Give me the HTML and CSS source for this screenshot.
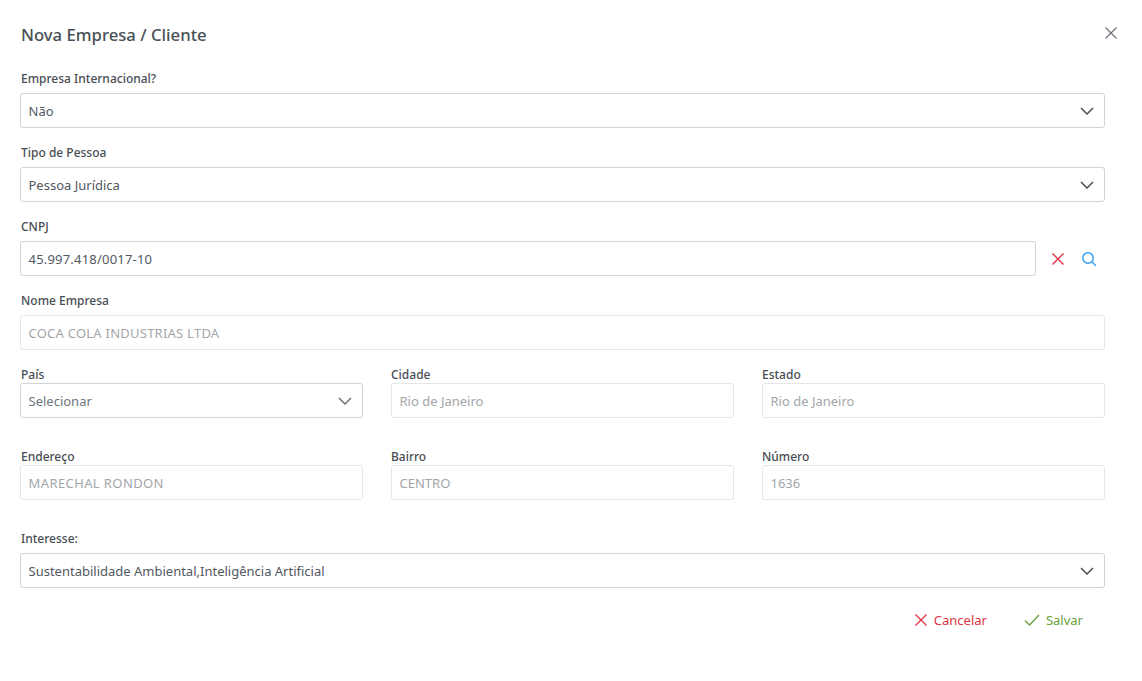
FILE: index.html
```html
<!DOCTYPE html>
<html lang="pt">
<head>
<meta charset="utf-8">
<title>Nova Empresa / Cliente</title>
<link rel="stylesheet" href="styles.css">
</head>
<body>
<div class="modal">
  <header class="modal-head">
    <h1 class="title">Nova Empresa / Cliente</h1>
    <button class="close" type="button" aria-label="Fechar">
      <svg width="14" height="14" viewBox="0 0 14 14"><path d="M1.5 1.5l11 11M12.5 1.5l-11 11" class="st st-gray"/></svg>
    </button>
  </header>
  <form class="form">
    <div class="field">
      <label class="label">Empresa Internacional?</label>
      <div class="control select"><span>Não</span><svg class="chev" width="14" height="8" viewBox="0 0 14 8"><path d="M1 1l6 6 6-6" class="st st-dark"/></svg></div>
    </div>
    <div class="field">
      <label class="label">Tipo de Pessoa</label>
      <div class="control select"><span>Pessoa Jurídica</span><svg class="chev" width="14" height="8" viewBox="0 0 14 8"><path d="M1 1l6 6 6-6" class="st st-dark"/></svg></div>
    </div>
    <div class="field">
      <label class="label">CNPJ</label>
      <div class="with-actions">
        <div class="control grow"><span class="digits">45.997.418/0017-10</span></div>
        <div class="actions">
          <svg width="14" height="14" viewBox="0 0 14 14"><path d="M1.5 1.5l11 11M12.5 1.5l-11 11" class="st st-red"/></svg>
          <svg width="16" height="16" viewBox="0 0 16 16"><circle cx="7" cy="7" r="5.2" class="st st-blue"/><path d="M10.8 10.8l4 4" class="st st-blue"/></svg>
        </div>
      </div>
    </div>
    <div class="field">
      <label class="label">Nome Empresa</label>
      <div class="control off"><span class="caps">COCA COLA INDUSTRIAS LTDA</span></div>
    </div>
    <div class="cols cols-a">
      <div class="col">
        <label class="label">País</label>
        <div class="control select placeholder"><span>Selecionar</span><svg class="chev" width="14" height="8" viewBox="0 0 14 8"><path d="M1 1l6 6 6-6" class="st st-dark"/></svg></div>
      </div>
      <div class="col">
        <label class="label">Cidade</label>
        <div class="control off"><span>Rio de Janeiro</span></div>
      </div>
      <div class="col">
        <label class="label">Estado</label>
        <div class="control off"><span>Rio de Janeiro</span></div>
      </div>
    </div>
    <div class="cols cols-b">
      <div class="col">
        <label class="label">Endereço</label>
        <div class="control off"><span class="caps-wide">MARECHAL RONDON</span></div>
      </div>
      <div class="col">
        <label class="label">Bairro</label>
        <div class="control off"><span>CENTRO</span></div>
      </div>
      <div class="col">
        <label class="label">Número</label>
        <div class="control off"><span>1636</span></div>
      </div>
    </div>
    <div class="field">
      <label class="label">Interesse:</label>
      <div class="control select"><span>Sustentabilidade Ambiental,Inteligência Artificial</span><svg class="chev" width="14" height="8" viewBox="0 0 14 8"><path d="M1 1l6 6 6-6" class="st st-dark"/></svg></div>
    </div>
    <div class="foot">
      <button class="btn btn-cancel" type="button">
        <svg width="14" height="14" viewBox="0 0 14 14"><path d="M1.5 1.5l11 11M12.5 1.5l-11 11" class="st st-red"/></svg>
        Cancelar
      </button>
      <button class="btn btn-save" type="button">
        <svg width="16" height="12" viewBox="0 0 16 12"><path d="M1 6.5l4.5 4.5L15 1" class="st st-green"/></svg>
        Salvar
      </button>
    </div>
  </form>
</div>
</body>
</html>
```
FILE: styles.css
```css
* { box-sizing: border-box; }
html, body { margin: 0; padding: 0; background: #fff; }
body { font-family: "Noto Sans", "Open Sans", sans-serif; font-size: 13px; color: #495057; height: 681px; overflow: hidden; }
.modal { padding: 0 37px 0 20px; }
.modal-head { display: flex; justify-content: space-between; align-items: center; height: 71px; padding-bottom: 1px; margin-right: -13px; }
.title { margin: 0 0 0 1px; font-size: 16.7px; font-weight: 500; color: #495057; line-height: 24px; }
.close { border: 0; background: none; padding: 0; width: 14px; height: 14px; display: flex; margin-top: -5px; }
.form { display: flex; flex-direction: column; }
.field { margin-bottom: 17px; }
.label { display: block; font-size: 12px; font-weight: 500; color: #474d53; line-height: 16px; margin: 0 0 6px 1px; }
.control { height: 35px; border: 1px solid #ced4da; border-radius: 3px; padding: 0 8px 0 7.5px; display: flex; align-items: center; justify-content: space-between; color: #52585f; background: #fff; }
.off { color: #a3a6a9; border-color: #e4e7ea; }
.placeholder { color: #6c757d; }
.digits { letter-spacing: 0.2px; }
.caps { letter-spacing: 0.24px; }
.caps-wide { letter-spacing: 0.4px; }
.chev { margin-right: 2px; flex: none; }
.placeholder .st-dark { stroke: #6c757d; }
.with-actions { display: flex; align-items: center; }
.grow { flex: 1; }
.actions { width: 69px; flex: none; display: flex; align-items: center; gap: 16px; padding-left: 15px; }
.cols { display: grid; grid-template-columns: repeat(3, 1fr); gap: 28px; }
.cols .label { margin-bottom: 0; }
.col + .col .label { margin-left: 0; }
.cols-a { margin-bottom: 31px; }
.cols-b { margin-bottom: 31px; }
.foot { display: flex; justify-content: flex-end; align-items: center; gap: 37px; margin-top: 6px; padding-right: 22px; }
.btn { border: 0; background: none; padding: 0; font: inherit; display: flex; align-items: center; gap: 6px; }
.btn-cancel { color: #dc3545; }
.btn-save { color: #6a9f3b; }
.st { fill: none; stroke-width: 1.3; }
.st-gray { stroke: #6c757d; }
.st-dark { stroke: #495057; stroke-width: 1.5; }
.st-red { stroke: #dc3545; stroke-width: 1.4; }
.st-blue { stroke: #2d9cf0; stroke-width: 1.4; }
.st-green { stroke: #6a9f3b; }
```
